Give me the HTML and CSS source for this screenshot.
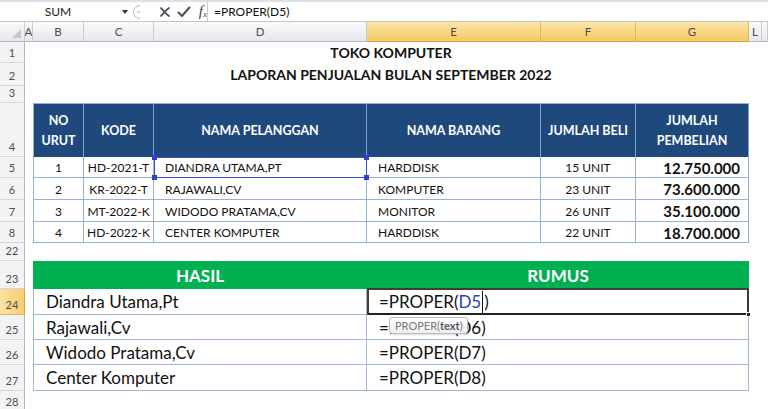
FILE: index.html
```html
<!DOCTYPE html>
<html>
<head>
<meta charset="utf-8">
<link rel="stylesheet" href="styles.css">
</head>
<body>
<div class="fbar">
  <div class="namebox"><span class="nb-text">SUM</span><span class="nb-arrow"></span></div>
  <div class="fbtns">
    <svg class="grip" width="10" height="16" viewBox="0 0 10 16"><path d="M8 1.5 A6.5 6.5 0 0 0 8 14.5" fill="none" stroke="#c4c8ce" stroke-width="1.2"/><path d="M5 8 H8" stroke="#b0b4ba" stroke-width="1.2"/></svg>
    <svg class="ico" width="12" height="12" viewBox="0 0 12 12"><path d="M2 2 C4 4 6 7 10 10 M10 2 C7 4 5 7 2 10" fill="none" stroke="#4a4f57" stroke-width="1.8" stroke-linecap="round"/></svg>
    <svg class="ico" width="14" height="12" viewBox="0 0 14 12"><path d="M1.5 6.5 L5 10 L12.5 1.5" fill="none" stroke="#4a4f57" stroke-width="2" stroke-linecap="round" stroke-linejoin="round"/></svg>
    <span class="fx">f<sub>x</sub></span>
  </div>
  <div class="finput">=PROPER(D5)</div>
</div>

<div class="sheet">
  <div class="ch corner"><span class="tri"></span></div>
  <div class="ch c2">A</div>
  <div class="ch c3">B</div>
  <div class="ch c4">C</div>
  <div class="ch c5">D</div>
  <div class="ch sel c6">E</div>
  <div class="ch sel c7">F</div>
  <div class="ch sel c8">G</div>
  <div class="ch c9">L</div>
  <div class="ch c10"></div>

  <div class="rh r2">1</div>
  <div class="rh r3">2</div>
  <div class="rh r4">3</div>
  <div class="rh r5">4</div>
  <div class="rh r6">5</div>
  <div class="rh r7">6</div>
  <div class="rh r8">7</div>
  <div class="rh r9">8</div>
  <div class="rh r10">22</div>
  <div class="rh r11">23</div>
  <div class="rh sel r12">24</div>
  <div class="rh r13">25</div>
  <div class="rh r14">26</div>
  <div class="rh r15">27</div>
  <div class="rh r16">28</div>

  <div class="title r2 span38">TOKO KOMPUTER</div>
  <div class="title r3 span38">LAPORAN PENJUALAN BULAN SEPTEMBER 2022</div>

  <div class="th first top r5 c3">NO<br>URUT</div>
  <div class="th top r5 c4">KODE</div>
  <div class="th top r5 c5">NAMA PELANGGAN</div>
  <div class="th top r5 c6">NAMA BARANG</div>
  <div class="th top r5 c7">JUMLAH BELI</div>
  <div class="th top r5 c8">JUMLAH<br>PEMBELIAN</div>

  <div class="td first ctr r6 c3">1</div>
  <div class="td ctr r6 c4">HD-2021-T</div>
  <div class="td left r6 c5">DIANDRA UTAMA,PT</div>
  <div class="td left r6 c6">HARDDISK</div>
  <div class="td ctr r6 c7">15 UNIT</div>
  <div class="td num r6 c8">12.750.000</div>

  <div class="td first ctr r7 c3">2</div>
  <div class="td ctr r7 c4">KR-2022-T</div>
  <div class="td left r7 c5">RAJAWALI,CV</div>
  <div class="td left r7 c6">KOMPUTER</div>
  <div class="td ctr r7 c7">23 UNIT</div>
  <div class="td num r7 c8">73.600.000</div>

  <div class="td first ctr r8 c3">3</div>
  <div class="td ctr r8 c4">MT-2022-K</div>
  <div class="td left r8 c5">WIDODO PRATAMA,CV</div>
  <div class="td left r8 c6">MONITOR</div>
  <div class="td ctr r8 c7">26 UNIT</div>
  <div class="td num r8 c8">35.100.000</div>

  <div class="td first ctr r9 c3">4</div>
  <div class="td ctr r9 c4">HD-2022-K</div>
  <div class="td left r9 c5">CENTER KOMPUTER</div>
  <div class="td left r9 c6">HARDDISK</div>
  <div class="td ctr r9 c7">22 UNIT</div>
  <div class="td num r9 c8">18.700.000</div>

  <div class="ref r6 c5"><span class="h tl"></span><span class="h tr"></span><span class="h bl"></span><span class="h br"></span></div>

  <div class="gh first r11 span35">HASIL</div>
  <div class="gh r11 span68">RUMUS</div>

  <div class="tb first r12 span35">Diandra Utama,Pt</div>
  <div class="tb r12 span68">=PROPER(<span class="refc">D5</span><span class="caret"></span>)</div>
  <div class="tb first r13 span35">Rajawali,Cv</div>
  <div class="tb r13 span68">=PROPER(D6)</div>
  <div class="tb first r14 span35">Widodo Pratama,Cv</div>
  <div class="tb r14 span68">=PROPER(D7)</div>
  <div class="tb first r15 span35">Center Komputer</div>
  <div class="tb r15 span68">=PROPER(D8)</div>

  <div class="active r12 span68"><span class="fill"></span></div>
</div>

<div class="tip">PROPER(<b>text</b>)</div>
</body>
</html>
```

FILE: styles.css
```css
* { box-sizing: border-box; }
html, body { margin: 0; padding: 0; }
body {
  width: 768px;
  height: 409px;
  overflow: hidden;
  background: #ffffff;
  font-family: Lato, "Open Sans", "Liberation Sans", sans-serif;
  position: relative;
}

/* formula bar */
.fbar {
  display: flex;
  height: 22px;
  border-top: 2px solid #dde1e7;
  border-bottom: 1px solid #c3c7cd;
  background: #ffffff;
}
.namebox {
  width: 131px;
  display: flex;
  align-items: center;
}
.nb-text {
  width: 116px;
  text-align: center;
  font-size: 12px;
  color: #222;
}
.nb-arrow {
  width: 0; height: 0;
  border-left: 3px solid transparent;
  border-right: 3px solid transparent;
  border-top: 4px solid #333;
  margin-left: 6px;
}
.fbtns {
  width: 76px;
  display: flex;
  align-items: center;
  gap: 6px;
  padding-left: 1px;
}
.grip { margin-right: 11px; }
.fx {
  font-family: "Liberation Serif", serif;
  font-style: italic;
  font-size: 15px;
  color: #444;
  line-height: 1;
  margin-left: 2px;
}
.fx sub { font-size: 9px; vertical-align: -1px; }
.finput {
  flex: 1;
  border-left: 1px solid #c9cdd3;
  display: flex;
  align-items: center;
  padding-left: 6px;
  font-size: 12px;
  color: #111;
}

/* sheet grid */
.sheet {
  display: grid;
  grid-template-columns: 25px 8px 51px 70px 213px 174px 95px 113px 13px 6px;
  grid-template-rows: 20px 21px 23px 17px 54px 21px 22px 22px 21px 18px 28px 26px 25px 25px 26px 21px;
}

.c2 { grid-column: 2; }
.c3 { grid-column: 3; }
.c4 { grid-column: 4; }
.c5 { grid-column: 5; }
.c6 { grid-column: 6; }
.c7 { grid-column: 7; }
.c8 { grid-column: 8; }
.c9 { grid-column: 9; }
.c10 { grid-column: 10; }
.span38 { grid-column: 3 / 9; }
.span35 { grid-column: 3 / 6; }
.span68 { grid-column: 6 / 9; }

.r2 { grid-row: 2; }
.r3 { grid-row: 3; }
.r4 { grid-row: 4; }
.r5 { grid-row: 5; }
.r6 { grid-row: 6; }
.r7 { grid-row: 7; }
.r8 { grid-row: 8; }
.r9 { grid-row: 9; }
.r10 { grid-row: 10; }
.r11 { grid-row: 11; }
.r12 { grid-row: 12; }
.r13 { grid-row: 13; }
.r14 { grid-row: 14; }
.r15 { grid-row: 15; }
.r16 { grid-row: 16; }

/* headers */
.ch {
  grid-row: 1;
  background: linear-gradient(#f9fafb, #e6e8ec);
  border-right: 1px solid #c8ccd2;
  border-bottom: 1px solid #b3b8bf;
  font-size: 11.5px;
  color: #4d4d4d;
  display: flex;
  align-items: center;
  justify-content: center;
}
.ch.sel {
  background: linear-gradient(#fbe6a8, #f6c862);
  border-right-color: #e1b45a;
  border-bottom-color: #d9a443;
}
.corner { grid-column: 1; position: relative; }
.tri {
  position: absolute;
  right: 3px; bottom: 3px;
  width: 0; height: 0;
  border-left: 9px solid transparent;
  border-bottom: 9px solid #c3c7cd;
}
.rh {
  grid-column: 1;
  background: #f2f3f5;
  border-right: 1px solid #b3b8bf;
  border-bottom: 1px solid #d3d6db;
  font-size: 11px;
  color: #4d4d4d;
  display: flex;
  align-items: flex-end;
  justify-content: center;
  padding-bottom: 3px;
}
.rh.sel {
  background: linear-gradient(90deg, #fbe3a0, #f7cd70);
  border-bottom-color: #e2b55c;
  border-right-color: #d9a443;
}

/* titles */
.title {
  display: flex;
  align-items: center;
  justify-content: center;
  font-weight: 700;
  font-size: 14px;
  color: #111;
}

/* table 1 */
.th {
  background: #1f497d;
  color: #ffffff;
  font-weight: 700;
  font-size: 12.5px;
  line-height: 20px;
  text-align: center;
  display: flex;
  align-items: center;
  justify-content: center;
  border-right: 1px solid #7fa2cf;
}
.th.top { border-top: 1px solid #8fb0da; }
.th.first { border-left: 1px solid #8fb0da; }
.td {
  display: flex;
  align-items: center;
  font-size: 12px;
  color: #111;
  border-right: 1px solid #95b3d7;
  border-bottom: 1px solid #95b3d7;
  padding-top: 1px;
}
.td.first { border-left: 1px solid #95b3d7; }
.td.ctr { justify-content: center; }
.td.left { padding-left: 11px; }
.td.num {
  justify-content: flex-end;
  padding-right: 8px;
  font-weight: 700;
  font-size: 15px;
}

.ref {
  position: relative;
  border: 1px solid #3a4ec9;
  z-index: 2;
}
.h {
  position: absolute;
  width: 5px; height: 5px;
  background: #2f43c4;
}
.h.tl { left: -3px; top: -3px; }
.h.tr { right: -3px; top: -3px; }
.h.bl { left: -3px; bottom: -3px; }
.h.br { right: -3px; bottom: -3px; }

/* table 2 */
.gh {
  background: #00b050;
  color: #ffffff;
  font-weight: 700;
  font-size: 17px;
  display: flex;
  align-items: center;
  justify-content: center;
  padding-top: 1px;
}
.tb {
  display: flex;
  align-items: center;
  padding-left: 12px;
  font-size: 17px;
  color: #111;
  border-right: 1px solid #9fb8d6;
  border-bottom: 1px solid #9fb8d6;
}
.tb.first { border-left: 1px solid #9fb8d6; }
.refc { color: #2c3fb8; }
.caret {
  display: inline-block;
  width: 1px;
  height: 22px;
  background: #111;
  margin: 0 1px;
}
.active {
  position: relative;
  border: 2px solid #4a3b32;
  border-right-color: #3a3a3a;
  border-bottom-color: #222;
  margin-top: -1px;
  z-index: 2;
  pointer-events: none;
}
.fill {
  position: absolute;
  right: -4px; bottom: -4px;
  width: 5px; height: 5px;
  background: #222;
  border: 1px solid #fff;
}

/* tooltip */
.tip {
  position: absolute;
  left: 389px;
  top: 317px;
  width: 79px;
  height: 17px;
  background: linear-gradient(#ffffff, #eef0f3);
  border: 1px solid #b9bec6;
  border-radius: 3px;
  box-shadow: 1px 1px 2px rgba(0,0,0,0.15);
  font-size: 11px;
  color: #7a7a7a;
  display: flex;
  align-items: center;
  padding-left: 5px;
  z-index: 5;
}
.tip b { color: #555; }
```
